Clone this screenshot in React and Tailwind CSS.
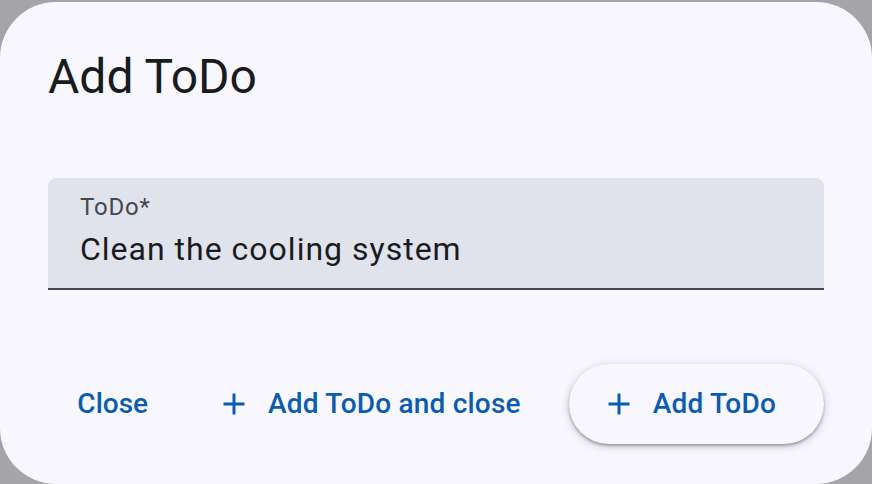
const PlusIcon = () => (
  <svg width="36" height="36" viewBox="0 0 24 24" fill="currentColor">
    <path d="M19 13h-6v6h-2v-6H5v-2h6V5h2v6h6v2z" />
  </svg>
)

const App = () => {
  return (
    <div className="h-[484px] w-[872px] overflow-hidden bg-[#a5a4a9] pt-[2px] font-['Roboto',sans-serif]">
      <div className="flex h-[482px] flex-col rounded-[56px] bg-[#f8f7fe] px-12 pt-[43px]">
        <h2 className="text-[48px] leading-[64px] text-[#1a1b20]">Add ToDo</h2>

        <div className="mt-[69px] h-[112px] rounded-t-[8px] border-b-2 border-[#44474e] bg-[#e0e2ec] px-8 pt-[13px]">
          <div className="text-[24px] leading-[32px] tracking-[0.8px] text-[#44474e]">ToDo*</div>
          <div className="mt-[2px] text-[32px] leading-[48px] tracking-[1px] text-[#1a1b20]">
            Clean the cooling system
          </div>
        </div>

        <div className="mt-[74px] flex items-center justify-end gap-4 text-[28px] font-medium leading-[40px] tracking-[0.2px] text-[#0b5cad]">
          <button className="mr-1 flex h-20 items-center rounded-full px-6 tracking-normal">Close</button>
          <button className="flex h-20 items-center gap-4 rounded-full pl-6 pr-8">
            <PlusIcon />
            Add ToDo and close
          </button>
          <button className="flex h-20 items-center gap-4 rounded-full bg-[#f8f7fe] pl-8 pr-12 shadow-[0_2px_3px_rgba(0,0,0,0.3),0_2px_8px_2px_rgba(0,0,0,0.12)]">
            <PlusIcon />
            Add ToDo
          </button>
        </div>
      </div>
    </div>
  )
}

export default App
